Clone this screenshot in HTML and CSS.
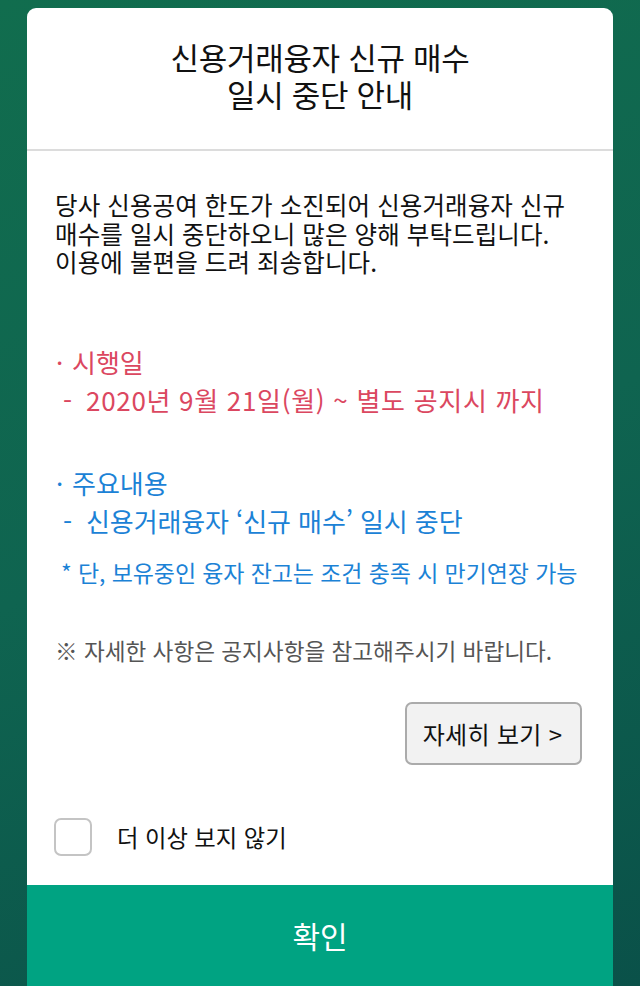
FILE: index.html
```html
<!DOCTYPE html>
<html lang="ko">
<head>
<meta charset="utf-8">
<title>신용거래융자 신규 매수 일시 중단 안내</title>
<link rel="stylesheet" href="styles.css">
</head>
<body>
<div class="card">
  <header class="head">
    <h1 class="title">신용거래융자 신규 매수<br>일시 중단 안내</h1>
  </header>
  <main class="content">
    <p class="intro">당사 신용공여 한도가 소진되어 신용거래융자 신규<br>매수를 일시 중단하오니 많은 양해 부탁드립니다.<br>이용에 불편을 드려 죄송합니다.</p>
    <div class="sec red">
      <p class="sec-title"><span class="dot">·</span>시행일</p>
      <p class="sec-item"><span class="dash">-</span>2020년 9월 21일(월) ~ 별도 공지시 까지</p>
    </div>
    <div class="sec blue">
      <p class="sec-title"><span class="dot">·</span>주요내용</p>
      <p class="sec-item"><span class="dash">-</span>신용거래융자 ‘신규 매수’ 일시 중단</p>
      <p class="note">* 단, 보유중인 융자 잔고는 조건 충족 시 만기연장 가능</p>
    </div>
    <p class="ref">※ 자세한 사항은 공지사항을 참고해주시기 바랍니다.</p>
    <div class="more-row">
      <button class="more">자세히 보기 &gt;</button>
    </div>
    <label class="check-row">
      <span class="box"></span>
      <span class="check-label">더 이상 보지 않기</span>
    </label>
  </main>
  <button class="ok">확인</button>
</div>
</body>
</html>
```

FILE: styles.css
```css
* { box-sizing: border-box; }
html, body { height: 100%; }
body {
  margin: 0;
  background: linear-gradient(160deg, #116d4e 0%, #0f6450 50%, #0a5149 100%);
  font-family: "Noto Sans CJK KR", "Noto Sans", sans-serif;
  overflow: hidden;
}
.card {
  margin: 8px 27px 0;
  height: 978px;
  background: #fff;
  border-radius: 9px 9px 0 0;
  display: flex;
  flex-direction: column;
  overflow: hidden;
}
.head {
  height: 143px;
  border-bottom: 2px solid #dcdcdc;
  padding-top: 30px;
  flex: none;
}
.title {
  margin: 0;
  text-align: center;
  font-weight: 400;
  font-size: 31px;
  line-height: 37px;
  color: #111;
  letter-spacing: -0.3px;
}
.content {
  flex: 1;
  padding: 40px 31px 0 28px;
  display: flex;
  flex-direction: column;
}
p { margin: 0; }
.intro {
  font-size: 24.5px;
  line-height: 28.5px;
  color: #111;
  letter-spacing: 0.1px;
}
.sec { font-size: 26px; }
.sec-title { line-height: 39px; }
.sec-item { line-height: 38px; padding-left: 8px; }
.red .sec-item { letter-spacing: 0.7px; }
.blue .sec-item { letter-spacing: -0.1px; }
.dot { display: inline-block; width: 17px; padding-left: 1px; }
.dash { display: inline-block; width: 23px; letter-spacing: 0; }
.red { color: #db4760; margin-top: 65px; }
.blue { color: #1b82d6; margin-top: 44px; }
.note {
  font-size: 23px;
  line-height: 30px;
  margin-top: 17px;
  padding-left: 6px;
  letter-spacing: -0.1px;
}
.ref {
  margin-top: 49px;
  font-size: 22.6px;
  line-height: 30px;
  color: #555;
  letter-spacing: 0;
}
.more-row {
  display: flex;
  justify-content: flex-end;
  margin-top: 36px;
}
.more {
  width: 177px;
  height: 63px;
  background: #f2f2f2;
  border: 2px solid #ababab;
  border-radius: 7px;
  font-family: inherit;
  font-size: 24px;
  color: #111;
  letter-spacing: 0.3px;
  padding: 0 2px 0 0;
}
.check-row {
  display: flex;
  align-items: center;
  margin-top: 53px;
}
.box {
  width: 38px;
  height: 38px;
  border: 2px solid #c4c4c4;
  border-radius: 7px;
  margin-left: -1px;
}
.check-label {
  margin-left: 25px;
  font-size: 23.3px;
  color: #111;
}
.ok {
  height: 101px;
  border: 0;
  background: #00a382;
  color: #fff;
  font-family: inherit;
  font-size: 30px;
  padding: 0 0 2px;
  flex: none;
}
```
